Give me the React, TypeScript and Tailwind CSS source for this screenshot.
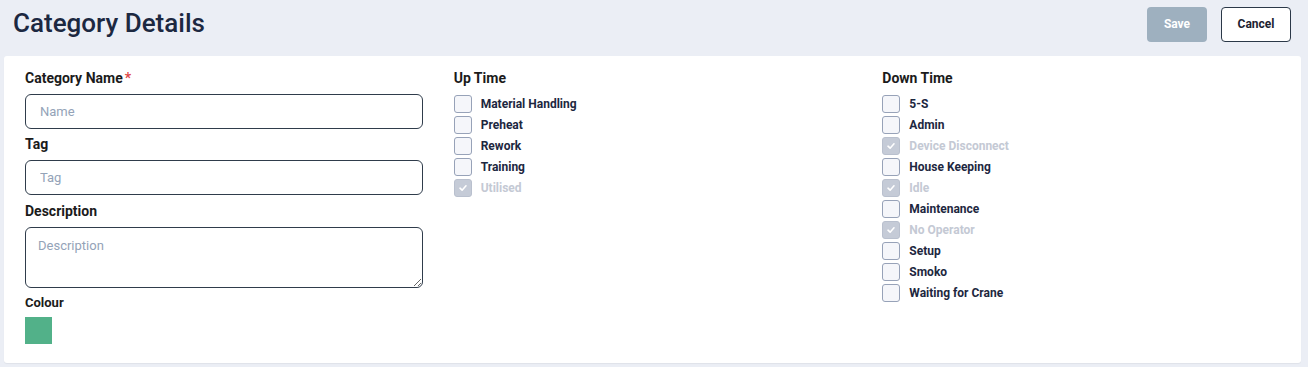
import React from 'react';

const upTime = [
  { label: 'Material Handling', disabled: false },
  { label: 'Preheat', disabled: false },
  { label: 'Rework', disabled: false },
  { label: 'Training', disabled: false },
  { label: 'Utilised', disabled: true },
];

const downTime = [
  { label: '5-S', disabled: false },
  { label: 'Admin', disabled: false },
  { label: 'Device Disconnect', disabled: true },
  { label: 'House Keeping', disabled: false },
  { label: 'Idle', disabled: true },
  { label: 'Maintenance', disabled: false },
  { label: 'No Operator', disabled: true },
  { label: 'Setup', disabled: false },
  { label: 'Smoko', disabled: false },
  { label: 'Waiting for Crane', disabled: false },
];

function CheckRow({ label, disabled }: { label: string; disabled: boolean }) {
  return (
    <label className="flex items-center h-[21px]">
      {disabled ? (
        <span className="w-[18px] h-[18px] rounded-[3px] bg-[#c5cbd7] border border-[#b9c0ce] flex items-center justify-center">
          <svg width="10" height="10" viewBox="0 0 10 10" fill="none">
            <path d="M2 5.2 L4.1 7.2 L8 2.8" stroke="#ffffff" strokeWidth="1.6" strokeLinecap="round" strokeLinejoin="round" />
          </svg>
        </span>
      ) : (
        <span className="w-[18px] h-[18px] rounded-[3px] bg-[#f5f6fa] border border-[#97a2b8]" />
      )}
      <span className={`ml-[9px] text-[12px] font-bold ${disabled ? 'text-[#c4c9d4]' : 'text-[#1d2740]'}`}>{label}</span>
    </label>
  );
}

export default function App() {
  return (
    <div className="w-[1308px] h-[367px] bg-[#ebeef5] font-['Roboto',sans-serif] overflow-hidden">
      <div className="flex items-center justify-between h-[56px] pl-[13px] pr-[17px]">
        <h1 className="text-[26px] font-medium text-[#1c2841] leading-none -mt-[10px]">Category Details</h1>
        <div className="flex gap-[14px] -mt-[8px]">
          <button className="w-[60px] h-[35px] rounded-[4px] bg-[#9eb0bf] text-white text-[12px] font-bold">Save</button>
          <button className="w-[70px] h-[35px] rounded-[4px] bg-white border border-[#2b3848] text-[#1c2230] text-[12px] font-bold">Cancel</button>
        </div>
      </div>
      <div className="mx-[4px] mr-[7px] h-[307px] bg-white rounded-[3px] shadow-[0_1px_1px_rgba(0,0,0,0.05)] pt-[13px] px-[21px]">
        <div className="grid grid-cols-3 gap-x-[31px]">
          <div>
            <div className="text-[14px] font-bold text-[#1b1b1b] leading-[18px]">
              Category Name<span className="text-[#e04848] ml-[2px]">*</span>
            </div>
            <input
              placeholder="Name"
              className="mt-[7px] w-full h-[35px] rounded-[6px] border border-[#2f3c4b] px-[14px] text-[13px] placeholder:text-[#94a3b8] outline-none"
            />
            <div className="mt-[6px] text-[14px] font-bold text-[#1b1b1b] leading-[18px]">Tag</div>
            <input
              placeholder="Tag"
              className="mt-[7px] w-full h-[35px] rounded-[6px] border border-[#2f3c4b] px-[14px] text-[13px] placeholder:text-[#94a3b8] outline-none"
            />
            <div className="mt-[7px] text-[14px] font-bold text-[#1b1b1b] leading-[18px]">Description</div>
            <textarea
              placeholder="Description"
              className="mt-[7px] block w-full h-[61px] rounded-[6px] border border-[#2f3c4b] px-[12px] pt-[8px] text-[13px] placeholder:text-[#94a3b8] outline-none"
            />
            <div className="mt-[7px] text-[13px] font-bold text-[#1b1b1b] leading-[16px]">Colour</div>
            <div className="mt-[6px] w-[27px] h-[27px] bg-[#52b189]" />
          </div>
          <div>
            <div className="text-[14px] font-bold text-[#1b1b1b] leading-[18px] mb-[6px]">Up Time</div>
            {upTime.map((c) => (
              <CheckRow key={c.label} {...c} />
            ))}
          </div>
          <div>
            <div className="text-[14px] font-bold text-[#1b1b1b] leading-[18px] mb-[6px]">Down Time</div>
            {downTime.map((c) => (
              <CheckRow key={c.label} {...c} />
            ))}
          </div>
        </div>
      </div>
    </div>
  );
}
